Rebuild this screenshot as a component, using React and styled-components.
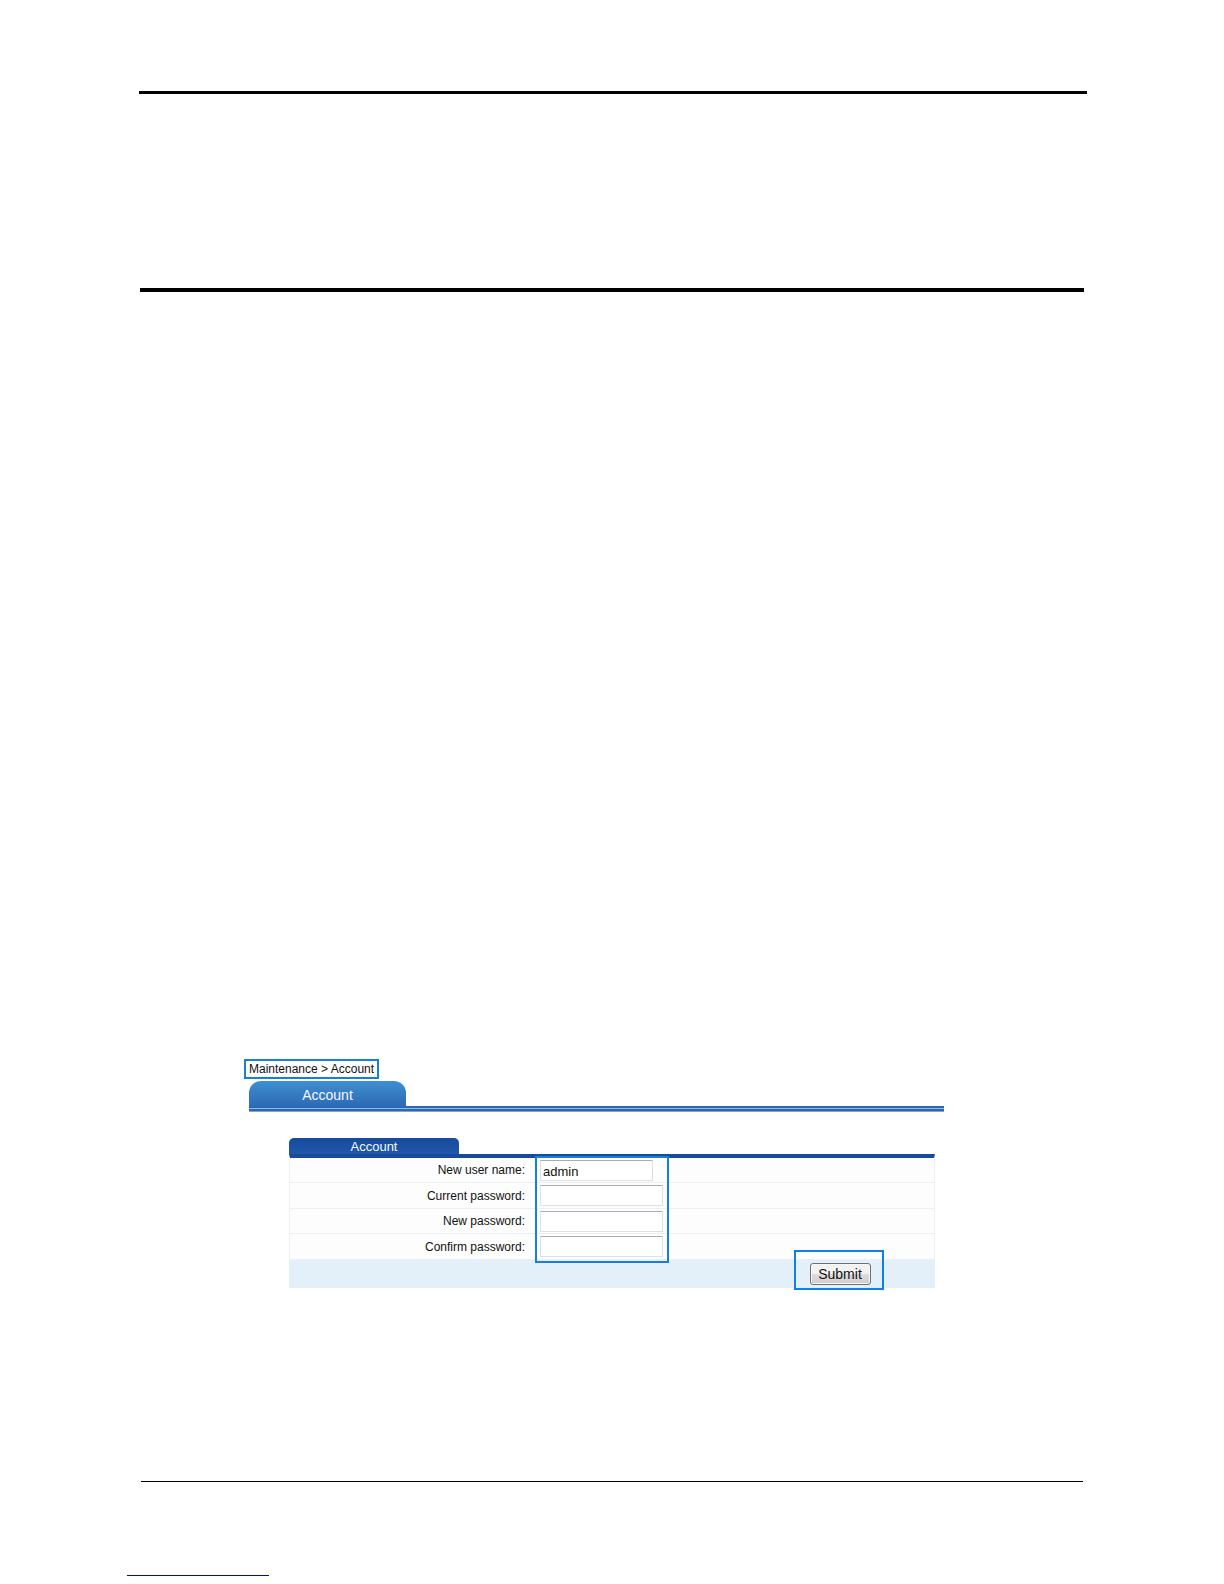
import React, { useState } from "react";
import styled, { createGlobalStyle } from "styled-components";

const fields = [
  { name: "username", label: "New user name:", type: "text", width: 113 },
  { name: "current", label: "Current password:", type: "password", width: 123 },
  { name: "password", label: "New password:", type: "password", width: 123 },
  { name: "confirm", label: "Confirm password:", type: "password", width: 123 },
];

export default function App() {
  const [formData, setFormData] = useState({
    username: "admin",
    current: "",
    password: "",
    confirm: "",
  });

  const onChangeHandler = (e) => {
    setFormData({ ...formData, [e.target.name]: e.target.value });
  };

  const submitHandler = (e) => {
    e.preventDefault();
  };

  return (
    <Page>
      <GlobalStyle />
      <Header>
        <Rule $size={3} />
        <TitleRule $size={4} />
      </Header>
      <Panel>
        <Breadcrumb>Maintenance &gt; Account</Breadcrumb>
        <Content>
          <TabBar>
            <Tab>Account</Tab>
          </TabBar>
          <Form onSubmit={submitHandler}>
            <SectionTitle>Account</SectionTitle>
            <Fields>
              {fields.map((field) => (
                <Row key={field.name}>
                  <Label htmlFor={field.name}>{field.label}</Label>
                  <Input
                    id={field.name}
                    name={field.name}
                    type={field.type}
                    $width={field.width}
                    value={formData[field.name]}
                    onChange={onChangeHandler}
                  />
                </Row>
              ))}
              <FieldsOutline />
            </Fields>
            <Actions>
              <SubmitOutline>
                <SubmitButton type="submit">Submit</SubmitButton>
              </SubmitOutline>
            </Actions>
          </Form>
        </Content>
      </Panel>
      <Footer>
        <Rule $size={1} />
      </Footer>
      <FooterLink href="#top" />
    </Page>
  );
}

const GlobalStyle = createGlobalStyle`
  * {
    box-sizing: border-box;
  }
  body {
    margin: 0;
    background: #fff;
    color: #111;
    font-family: "Liberation Sans", Arial, sans-serif;
    font-size: 12px;
  }
`;

const Page = styled.main`
  display: flex;
  flex-direction: column;
  min-height: 100vh;
  padding: 91px 0 8px;
`;

const Header = styled.header`
  margin: 0 137px 0 139px;
`;

const Rule = styled.div`
  height: ${({ $size }) => $size}px;
  background: #000;
`;

const TitleRule = styled(Rule)`
  margin: 194px 3px 0 1px;
`;

const Panel = styled.section`
  margin: 767px 280px 0 244px;
`;

const Breadcrumb = styled.nav`
  width: fit-content;
  padding: 0 3px;
  border: 2px solid #1480dc;
  line-height: 16px;
  font-size: 12px;
`;

const Content = styled.div`
  padding: 2px 0 0 5px;
`;

const TabBar = styled.div`
  position: relative;
  height: 31px;

  /* double line that runs under the tab */
  &::after {
    content: "";
    position: absolute;
    left: 0;
    right: 0;
    bottom: 0;
    height: 6px;
    background: linear-gradient(
      #2b67b2 0 2px,
      #8dbbe6 2px 3px,
      #2b67b2 3px 5px,
      #7fa5d4 5px 6px
    );
  }
`;

const Tab = styled.h1`
  width: 157px;
  height: 27px;
  margin: 0;
  border-radius: 12px 12px 0 0;
  background: linear-gradient(#3f8fd0, #2b68b3);
  color: #f4f9ff;
  font-size: 14px;
  font-weight: 400;
  line-height: 28px;
  text-align: center;
`;

const Form = styled.form`
  margin: 26px 9px 0 40px;
`;

const SectionTitle = styled.h2`
  width: 170px;
  height: 16px;
  margin: 0;
  border-radius: 5px 5px 0 0;
  background: linear-gradient(#164a9d, #2057a8);
  color: #f4f9ff;
  font-size: 13px;
  font-weight: 400;
  line-height: 17px;
  text-align: center;
`;

const Fields = styled.div`
  position: relative;
  z-index: 1;
  border: 1px solid #eef1f3;
  border-top: 4px solid #184a9e;
  border-bottom: none;
`;

const Row = styled.div`
  display: flex;
  align-items: center;
  gap: 15px;
  min-height: 25px;
  border-bottom: 1px solid #e9eff2;
  background: #fdfdfd;

  &:nth-child(even) {
    min-height: 26px;
  }
`;

const Label = styled.label`
  width: 235px;
  text-align: right;
`;

const Input = styled.input`
  width: ${({ $width }) => $width}px;
  height: 21px;
  padding: 2px 2px 0;
  border: 1px solid #dcdfe3;
  border-top-color: #abadb3;
  border-radius: 1px;
  background: #fff;
  color: #111;
  font-family: inherit;
  font-size: 13px;
  outline: none;
`;

/* blue frame drawn over the input column */
const FieldsOutline = styled.div`
  position: absolute;
  top: -2px;
  bottom: -3px;
  left: 245px;
  width: 134px;
  border: 2px solid #1480dc;
  pointer-events: none;
`;

const Actions = styled.div`
  position: relative;
  height: 28px;
  background: #e4f0f9;
`;

const SubmitOutline = styled.div`
  position: absolute;
  z-index: 2;
  right: 51px;
  bottom: -2px;
  display: flex;
  justify-content: center;
  align-items: flex-end;
  width: 90px;
  height: 40px;
  padding: 0 0 3px 2px;
  border: 2px solid #0f80ea;
`;

const SubmitButton = styled.button`
  width: 61px;
  height: 22px;
  padding: 0;
  border: 1px solid #707070;
  border-radius: 3px;
  background: linear-gradient(#f3f2f3 0 50%, #dfdcde 50%, #d0cdd0);
  box-shadow: inset 0 0 0 1px #f8f8f8;
  color: #111;
  font-family: inherit;
  font-size: 14px;
  line-height: 18px;
`;

const Footer = styled.footer`
  margin: auto 141px 93px;
`;

const FooterLink = styled.a`
  width: 142px;
  margin-left: 127px;
  border-bottom: 1px solid #0a0a8c;
`;
